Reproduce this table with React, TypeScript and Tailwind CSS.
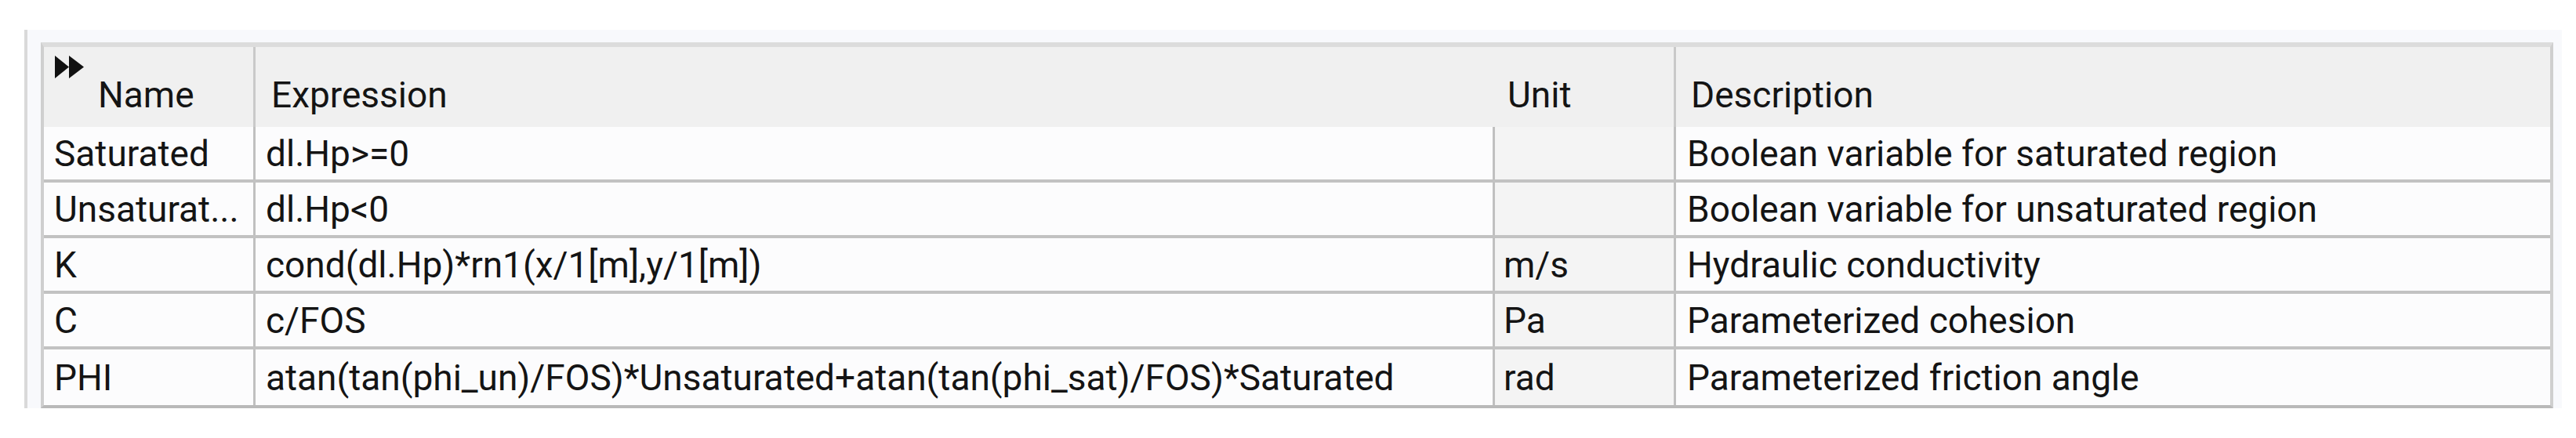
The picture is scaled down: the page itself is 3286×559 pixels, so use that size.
import React from 'react';

type Row = {
  name: string;
  expression: string;
  unit: string;
  description: string;
};

const rows: Row[] = [
  {
    name: 'Saturated',
    expression: 'dl.Hp>=0',
    unit: '',
    description: 'Boolean variable for saturated region',
  },
  {
    name: 'Unsaturat...',
    expression: 'dl.Hp<0',
    unit: '',
    description: 'Boolean variable for unsaturated region',
  },
  {
    name: 'K',
    expression: 'cond(dl.Hp)*rn1(x/1[m],y/1[m])',
    unit: 'm/s',
    description: 'Hydraulic conductivity',
  },
  {
    name: 'C',
    expression: 'c/FOS',
    unit: 'Pa',
    description: 'Parameterized cohesion',
  },
  {
    name: 'PHI',
    expression:
      'atan(tan(phi_un)/FOS)*Unsaturated+atan(tan(phi_sat)/FOS)*Saturated',
    unit: 'rad',
    description: 'Parameterized friction angle',
  },
];

const cols = 'grid grid-cols-[270px_1581px_231px_1115px]';

const ExpandIcon = () => (
  <svg
    width="37"
    height="29"
    viewBox="0 0 37 29"
    className="absolute left-[14px] top-[11px]"
  >
    <polygon points="0,0 18,14.5 0,29" fill="#111" />
    <polygon points="18,0 37,14.5 18,29" fill="#111" />
  </svg>
);

const App: React.FC = () => {
  return (
    <div
      className="w-[3286px] h-[559px] bg-white pt-[38px] pl-[31px] text-[#141414]"
      style={{ fontFamily: 'Roboto, "Open Sans", sans-serif' }}
    >
      <div className="w-[3237px] bg-[#f8f9fc] border-l-4 border-[#d9d9d9] pt-[16px] pl-[17px] pr-[11px]">
        <div className="w-[3205px] border-t-[6px] border-x-4 border-b-4 border-t-[#dcdcdc] border-x-[#cfcfcf] border-b-[#b9b9b9] text-[46px] leading-[54px]">
          {/* header */}
          <div className={`${cols} h-[102px] bg-[#f0f0f0]`}>
            <div className="relative flex items-center pt-[19px] pl-[69px] border-r-[3px] border-[#c9c9c9]">
              <ExpandIcon />
              Name
            </div>
            <div className="flex items-center pt-[19px] pl-[20px]">Expression</div>
            <div className="flex items-center pt-[19px] pl-[16px] border-r-[3px] border-[#c9c9c9]">
              Unit
            </div>
            <div className="flex items-center pt-[19px] pl-[19px]">Description</div>
          </div>

          {/* body */}
          {rows.map((row, idx) => (
            <div
              key={row.name}
              className={`${cols} h-[71px] bg-[#fcfcfd] ${
                idx < rows.length - 1 ? 'border-b-4 border-[#c2c2c2]' : ''
              }`}
            >
              <div className="flex items-center pl-[13px] border-r-[3px] border-[#c0c0c0] whitespace-nowrap">
                {row.name}
              </div>
              <div className="flex items-center pl-[13px] border-r-[3px] border-[#c0c0c0] whitespace-nowrap">
                {row.expression}
              </div>
              <div className="flex items-center pl-[11px] border-r-[3px] border-[#c0c0c0] bg-[#f4f4f4] whitespace-nowrap">
                {row.unit}
              </div>
              <div className="flex items-center pl-[14px] whitespace-nowrap">
                {row.description}
              </div>
            </div>
          ))}
        </div>
      </div>
    </div>
  );
};

export default App;
